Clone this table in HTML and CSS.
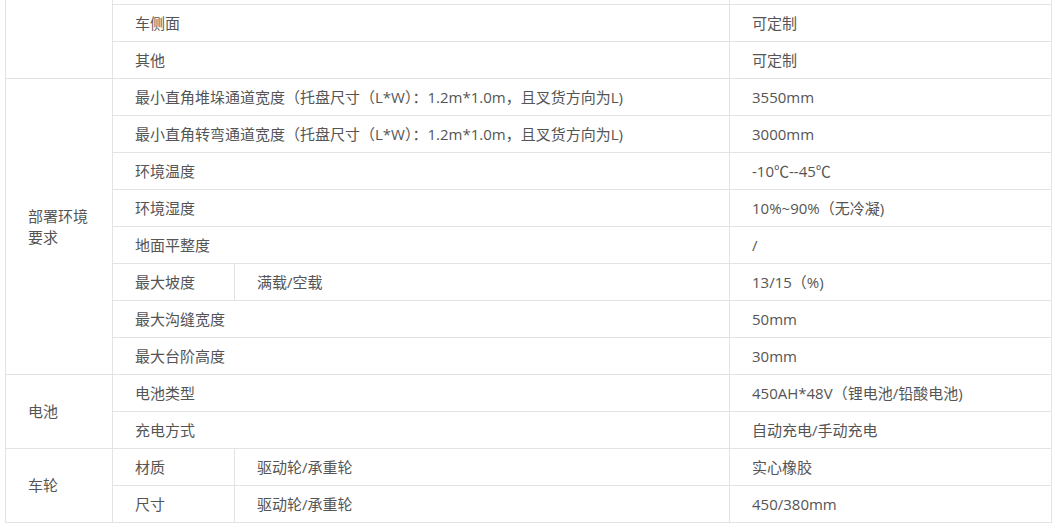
FILE: index.html
```html
<!DOCTYPE html>
<html lang="zh-CN">
<head>
<meta charset="utf-8">
<title>参数表</title>
<link rel="stylesheet" href="styles.css">
</head>
<body>
<table class="spec">
  <colgroup>
    <col class="c-group">
    <col class="c-name">
    <col class="c-sub">
    <col class="c-value">
  </colgroup>
  <tbody>
    <tr class="tail">
      <td class="group" rowspan="3"></td>
      <td colspan="2"></td>
      <td></td>
    </tr>
    <tr>
      <td colspan="2">车侧面</td>
      <td>可定制</td>
    </tr>
    <tr>
      <td colspan="2">其他</td>
      <td>可定制</td>
    </tr>
    <tr>
      <td class="group" rowspan="8">部署环境要求</td>
      <td colspan="2">最小直角堆垛通道宽度（托盘尺寸（L*W）：1.2m*1.0m，且叉货方向为L)</td>
      <td>3550mm</td>
    </tr>
    <tr>
      <td colspan="2">最小直角转弯通道宽度（托盘尺寸（L*W）：1.2m*1.0m，且叉货方向为L)</td>
      <td>3000mm</td>
    </tr>
    <tr>
      <td colspan="2">环境温度</td>
      <td>-10℃--45℃</td>
    </tr>
    <tr>
      <td colspan="2">环境湿度</td>
      <td>10%~90%（无冷凝)</td>
    </tr>
    <tr>
      <td colspan="2">地面平整度</td>
      <td>/</td>
    </tr>
    <tr>
      <td>最大坡度</td>
      <td>满载/空载</td>
      <td>13/15（%)</td>
    </tr>
    <tr>
      <td colspan="2">最大沟缝宽度</td>
      <td>50mm</td>
    </tr>
    <tr>
      <td colspan="2">最大台阶高度</td>
      <td>30mm</td>
    </tr>
    <tr>
      <td class="group" rowspan="2">电池</td>
      <td colspan="2">电池类型</td>
      <td>450AH*48V（锂电池/铅酸电池)</td>
    </tr>
    <tr>
      <td colspan="2">充电方式</td>
      <td>自动充电/手动充电</td>
    </tr>
    <tr>
      <td class="group" rowspan="2">车轮</td>
      <td>材质</td>
      <td>驱动轮/承重轮</td>
      <td>实心橡胶</td>
    </tr>
    <tr>
      <td>尺寸</td>
      <td>驱动轮/承重轮</td>
      <td>450/380mm</td>
    </tr>
  </tbody>
</table>
</body>
</html>
```
FILE: styles.css
```css
html, body {
  margin: 0;
  padding: 0;
  background: #ffffff;
}

body {
  font-family: "Open Sans", "Noto Sans CJK SC", sans-serif;
  font-size: 15px;
  color: #555555;
  overflow: hidden;
}

.spec {
  border-collapse: collapse;
  table-layout: fixed;
  width: 1046px;
  margin: -1px 0 0 5px;
}

.c-group { width: 107px; }
.c-name { width: 122px; }
.c-sub { width: 495px; }
.c-value { width: 322px; }

.spec td {
  border: 1px solid #e3e3e3;
  padding: 8px 22px;
  height: 20px;
  line-height: 20px;
  text-align: left;
  vertical-align: middle;
}

.spec td.group {
  line-height: 21px;
}

.spec tr.tail td {
  height: 4px;
  padding: 0;
  line-height: 0;
}
```
